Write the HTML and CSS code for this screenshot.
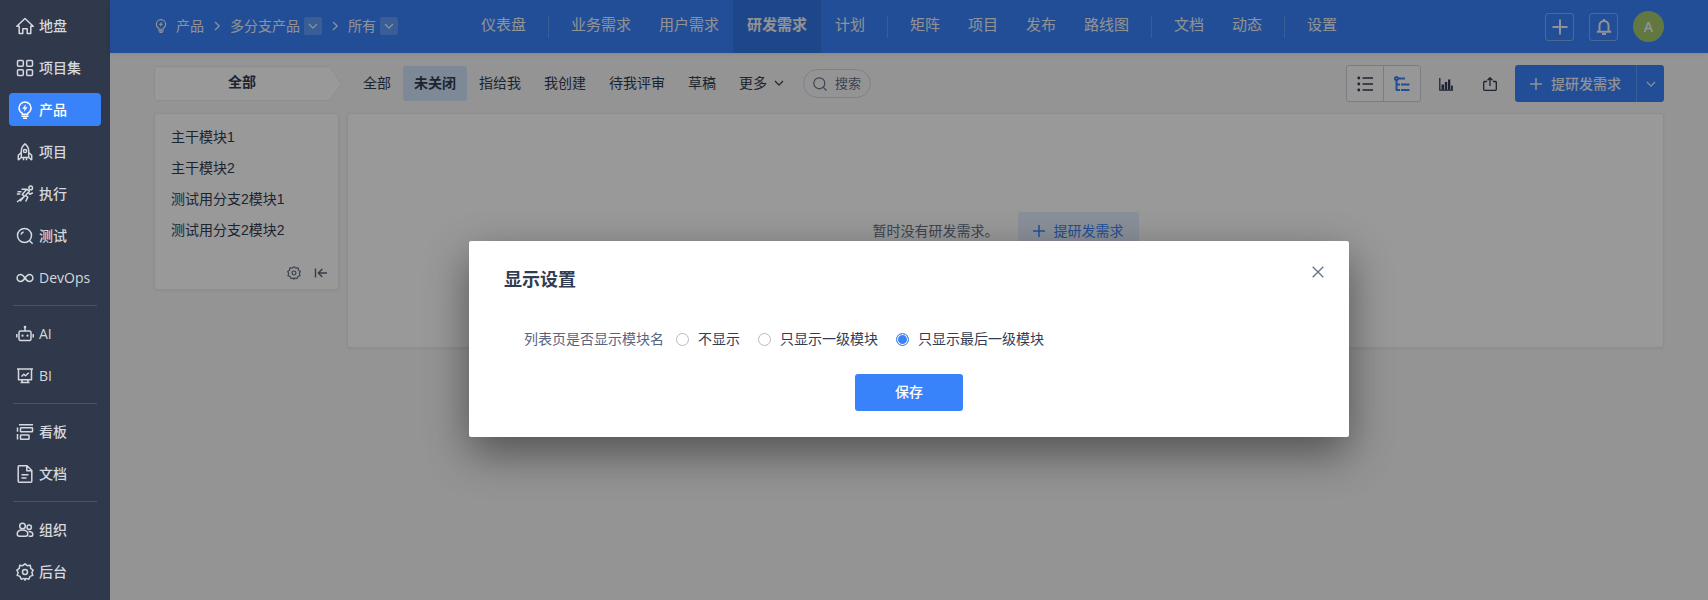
FILE: index.html
```html
<!DOCTYPE html>
<html lang="zh-CN">
<head>
    <meta charset="UTF-8">
    <meta name="viewport" content="width=device-width, initial-scale=1.0">
    <title>研发需求 - 显示设置</title>
    <link rel="stylesheet" href="styles.css">
</head>
<body>
    <!-- 公用图标 -->
    <svg class="icon-defs" aria-hidden="true">
        <symbol id="icon-bulb" viewBox="0 0 18 18">
            <path d="M6.2 13.2v-1.1C4.300 11 3 9.200 3 6.900a6 6 0 0 1 12 0c0 2.300-1.300 4.100-3.200 5.200v1.100zM5.500 15.200h7M7 17.200h4"/>
            <path class="fill" d="M9.800 3.300L6.300 7.700h2.200l-.6 3 3.700-4.500H9.300z"/>
        </symbol>
        <symbol id="icon-gear" viewBox="0 0 18 18">
            <path d="M9 .8l2.300 1.900 3-.4.4 3 2.400 1.800L15.900 9.500l.9 2.900-2.800 1-1.200 2.800-2.900-.8L9 17.200l-1-1.800-2.800.8L4 13.400l-2.800-1 .9-2.900L.9 7.100l2.400-1.800.4-3 3 .4z"/>
            <circle cx="9" cy="9" r="2.500"/>
        </symbol>
        <symbol id="icon-down" viewBox="0 0 10 10"><path d="M1 3l4 4.200L9 3"/></symbol>
        <symbol id="icon-right" viewBox="0 0 10 10"><path d="M3 1l4.200 4L3 9"/></symbol>
        <symbol id="icon-plus" viewBox="0 0 12 12"><path d="M6 0v12M0 6h12"/></symbol>
    </svg>

    <!-- 左侧主菜单 -->
    <nav class="sidebar">
        <a href="#" class="menu-item">
            <svg class="icon" viewBox="0 0 18 18"><path d="M.8 9.200L9 1.500l8.200 7.700h-2.400v7.300h-3.600v-4.800H6.800v4.800H3.200V9.200z"/></svg>地盘
        </a>
        <a href="#" class="menu-item">
            <svg class="icon" viewBox="0 0 18 18"><rect x="1.500" y="1.500" width="5.800" height="5.800" rx="1"/><rect x="10.700" y="1.500" width="5.800" height="5.800" rx="1"/><rect x="1.500" y="10.700" width="5.800" height="5.800" rx="1"/><rect x="10.700" y="10.700" width="5.800" height="5.800" rx="1"/></svg>项目集
        </a>
        <a href="#" class="menu-item active">
            <svg class="icon"><use href="#icon-bulb"/></svg>产品
        </a>
        <a href="#" class="menu-item">
            <svg class="icon" viewBox="0 0 18 18"><path d="M9 .8C6.500 2.800 5.300 5.400 5.300 8.200v6.300h7.400V8.200C12.700 5.400 11.500 2.800 9 .8zM5.300 9.500L2.300 12.300v4.500l3-2.300M12.700 9.500l3 2.800v4.500l-3-2.300M7.500 14.500v2.700M10.500 14.500v2.700"/><circle cx="9" cy="8" r="1.600"/></svg>项目
        </a>
        <a href="#" class="menu-item">
            <svg class="icon" viewBox="0 0 18 18"><circle cx="14.700" cy="2.900" r="1.800"/><path d="M5.500 4.200h5l2.800 2-3.800 4.300 2.300 1.700-2.100 4.300M10.300 4.800L6.200 9.400l2.300 2L1 17M8.500 11.200L4 16.300M12.300 7.500l1.600 1.700 2.900-1.400M1.500 6.700h4M.8 9h3.500"/></svg>执行
        </a>
        <a href="#" class="menu-item">
            <svg class="icon" viewBox="0 0 18 18"><circle cx="8.500" cy="8.500" r="7"/><path d="M13.600 13.700l3 3M5 7.500C5.400 6.200 6.300 5.300 7.600 5"/></svg>测试
        </a>
        <a href="#" class="menu-item">
            <svg class="icon" viewBox="0 0 18 18"><path d="M9 9C7.400 6.600 6.200 5.500 4.600 5.500a3.500 3.500 0 0 0 0 7C6.200 12.500 7.400 11.400 9 9s2.800-3.500 4.400-3.500a3.500 3.500 0 0 1 0 7C11.800 12.500 10.600 11.400 9 9z"/></svg>DevOps
        </a>
        <hr class="menu-divider">
        <a href="#" class="menu-item">
            <svg class="icon" viewBox="0 0 18 18"><rect x="3" y="6" width="12" height="9.500" rx="1.500"/><path d="M9 6V2.500M.8 9v3.500M17.200 9v3.500"/><circle class="fill" cx="9" cy="2" r="1.300"/><circle class="fill" cx="6.500" cy="10.700" r="1.100"/><circle class="fill" cx="11.500" cy="10.700" r="1.100"/></svg>AI
        </a>
        <a href="#" class="menu-item">
            <svg class="icon" viewBox="0 0 18 18"><path d="M1 2h16M2.500 2v10.700h13V2M5.500 9.500l2.300-2.300 1.700 1.500 3.300-3M6.500 13l-1 3M11.500 13l1 3M4.500 15.500h9"/></svg>BI
        </a>
        <hr class="menu-divider">
        <a href="#" class="menu-item">
            <svg class="icon" viewBox="0 0 18 18"><path d="M3 1.800h14M1.500 4.500v4.200M1.500 11v5.500"/><rect x="4.500" y="4.800" width="12" height="4" rx=".5"/><rect x="4.500" y="12" width="8.500" height="4.300" rx=".5"/></svg>看板
        </a>
        <a href="#" class="menu-item">
            <svg class="icon" viewBox="0 0 18 18"><path d="M11 .8H3.200a1 1 0 0 0-1 1v14.400a1 1 0 0 0 1 1h11.600a1 1 0 0 0 1-1V5.500zM10.800 1v4.700h4.800M5.500 9.700h7M5.500 13h5"/></svg>文档
        </a>
        <hr class="menu-divider">
        <a href="#" class="menu-item">
            <svg class="icon" viewBox="0 0 18 18"><circle cx="6.500" cy="5" r="2.800"/><circle cx="13.200" cy="6.200" r="2.200"/><path d="M1.200 13c0-2.400 2-4 5.300-4s5.300 1.600 5.300 4c0 1.500-1 2.200-2.300 2.200h-6c-1.300 0-2.300-.7-2.300-2.200zM12.500 10.500c2.700 0 4.300 1.200 4.300 2.900 0 1.200-.8 1.800-1.800 1.800h-2.300"/></svg>组织
        </a>
        <a href="#" class="menu-item">
            <svg class="icon"><use href="#icon-gear"/></svg>后台
        </a>
    </nav>

    <div class="app">
        <!-- 顶部导航 -->
        <header class="header">
            <div class="breadcrumb">
                <svg class="icon icon-md"><use href="#icon-bulb"/></svg>
                <a href="#">产品</a>
                <svg class="icon icon-sm"><use href="#icon-right"/></svg>
                <a href="#">多分支产品</a>
                <button class="drop-btn" aria-label="切换产品"><svg class="icon icon-sm"><use href="#icon-down"/></svg></button>
                <svg class="icon icon-sm"><use href="#icon-right"/></svg>
                <a href="#">所有</a>
                <button class="drop-btn" aria-label="切换分支"><svg class="icon icon-sm"><use href="#icon-down"/></svg></button>
            </div>
            <nav class="navbar">
                <a href="#">仪表盘</a>
                <span class="nav-divider"></span>
                <a href="#">业务需求</a>
                <a href="#">用户需求</a>
                <a href="#" class="active">研发需求</a>
                <a href="#">计划</a>
                <span class="nav-divider"></span>
                <a href="#">矩阵</a>
                <a href="#">项目</a>
                <a href="#">发布</a>
                <a href="#">路线图</a>
                <span class="nav-divider"></span>
                <a href="#">文档</a>
                <a href="#">动态</a>
                <span class="nav-divider"></span>
                <a href="#">设置</a>
            </nav>
            <div class="header-tools">
                <button class="tool-btn" aria-label="新建">
                    <svg class="icon icon-lg" viewBox="0 0 16 16"><path d="M8 .5v15M.5 8h15"/></svg>
                </button>
                <button class="tool-btn" aria-label="通知">
                    <svg class="icon icon-lg" viewBox="0 0 16 16"><path d="M3.500 12.500V6.500a4.500 4.500 0 0 1 9 0v6M.8 12.700h14.400M8 0v2M6 15h4"/></svg>
                </button>
                <button class="avatar">A</button>
            </div>
        </header>

        <main class="main">
            <!-- 工具栏 -->
            <div class="toolbar">
                <div class="module-title">
                    <svg class="module-shape" viewBox="0 0 188 35" preserveAspectRatio="none" aria-hidden="true"><path d="M2.500.5h173l12 17-12 17h-173a2 2 0 0 1-2-2v-30a2 2 0 0 1 2-2z"/></svg>
                    <span>全部</span>
                </div>
                <div class="filters">
                    <a href="#">全部</a>
                    <a href="#" class="active">未关闭</a>
                    <a href="#">指给我</a>
                    <a href="#">我创建</a>
                    <a href="#">待我评审</a>
                    <a href="#">草稿</a>
                    <a href="#">更多<svg class="icon icon-sm"><use href="#icon-down"/></svg></a>
                </div>
                <button class="search-btn">
                    <svg class="icon icon-md" viewBox="0 0 14 14"><circle cx="6.300" cy="6.300" r="5.500"/><path d="M10.300 10.300l3.200 3.200"/></svg>搜索
                </button>
                <div class="actions">
                    <div class="view-switch">
                        <button aria-label="列表">
                            <svg class="icon icon-lg" viewBox="0 0 16 16"><path d="M5.500 2H16M5.500 8H16M5.500 14H16"/><circle class="fill" cx="1.800" cy="2" r="1.400"/><circle class="fill" cx="1.800" cy="8" r="1.400"/><circle class="fill" cx="1.800" cy="14" r="1.400"/></svg>
                        </button>
                        <button class="on" aria-label="树形">
                            <svg class="icon icon-lg" viewBox="0 0 16 16"><path d="M4 2.500h7M2.500 4v10H6M2.500 8.500H6M7 8.500h8.500M7 14h8.500"/><circle cx="2.500" cy="2.500" r="1.500"/></svg>
                        </button>
                    </div>
                    <button class="icon-btn" aria-label="报表">
                        <svg class="icon icon-md" viewBox="0 0 14 14"><path d="M.8 1v12.200H14"/><path class="fill" d="M2.500 7.500h2.500v5.200H2.500zM5.800 5h2.400v7.700H5.800zM9 2.500h2.300v10.200H9zM12 8.500h1.800v4.200H12z"/></svg>
                    </button>
                    <button class="icon-btn" aria-label="导出">
                        <svg class="icon icon-md" viewBox="0 0 14 14"><path d="M4 4.500H1.500a.8.8 0 0 0-.8.800v7.200c0 .4.400.8.800.8h11c.4 0 .8-.4.800-.8V5.300a.8.8 0 0 0-.8-.8H10M7 9V1M4.500 3.200L7 .8l2.500 2.400"/></svg>
                    </button>
                    <div class="create-group">
                        <button class="create-btn"><svg class="icon icon-plus"><use href="#icon-plus"/></svg>提研发需求</button>
                        <button class="create-more" aria-label="更多操作"><svg class="icon icon-sm"><use href="#icon-down"/></svg></button>
                    </div>
                </div>
            </div>

            <div class="content">
                <!-- 模块树 -->
                <aside class="module-tree">
                    <ul>
                        <li><a href="#">主干模块1</a></li>
                        <li><a href="#">主干模块2</a></li>
                        <li><a href="#">测试用分支2模块1</a></li>
                        <li><a href="#">测试用分支2模块2</a></li>
                    </ul>
                    <div class="tree-footer">
                        <button aria-label="设置"><svg class="icon icon-md"><use href="#icon-gear"/></svg></button>
                        <button aria-label="收起"><svg class="icon icon-md" viewBox="0 0 14 14"><path d="M1.500 2.500v9M13 7H4.500M8.300 3L4.300 7l4 4"/></svg></button>
                    </div>
                </aside>
                <section class="list-panel">
                    <span>暂时没有研发需求。</span>
                    <button class="empty-btn"><svg class="icon icon-plus"><use href="#icon-plus"/></svg>提研发需求</button>
                </section>
            </div>
        </main>

        <!-- 显示设置弹窗 -->
        <div class="overlay">
            <form class="modal" role="dialog" aria-labelledby="modalTitle">
                <div class="modal-header">
                    <h1 id="modalTitle">显示设置</h1>
                    <button type="button" class="close-btn" aria-label="关闭">
                        <svg class="icon icon-plus" viewBox="0 0 12 12"><path d="M.7.7l10.600 10.600M11.300.7L.7 11.300"/></svg>
                    </button>
                </div>
                <div class="form-row" role="radiogroup" aria-labelledby="showLabel">
                    <span id="showLabel" class="form-label">列表页是否显示模块名</span>
                    <label><input type="radio" name="showModule" value="0">不显示</label>
                    <label><input type="radio" name="showModule" value="base">只显示一级模块</label>
                    <label><input type="radio" name="showModule" value="end" checked>只显示最后一级模块</label>
                </div>
                <button type="button" class="save-btn">保存</button>
            </form>
        </div>
    </div>
</body>
</html>
```
FILE: styles.css
```css
* {
    box-sizing: border-box;
}

body {
    margin: 0;
    display: flex;
    min-height: 100vh;
    background-color: #f7f7f8;
    color: #313c52;
    font-family: "Liberation Sans", "Noto Sans CJK SC", sans-serif;
    font-size: 14px;
    line-height: 20px;
}

a {
    color: inherit;
    text-decoration: none;
}

button {
    display: flex;
    align-items: center;
    justify-content: center;
    padding: 0;
    border: none;
    background: none;
    color: inherit;
    font: inherit;
    cursor: pointer;
}

/* 图标 */
.icon-defs {
    position: absolute;
    width: 0;
    height: 0;
}

.icon {
    flex: none;
    width: 18px;
    height: 18px;
    fill: none;
    stroke: currentColor;
    stroke-width: 1.5;
    stroke-linejoin: round;
}

.fill {
    fill: currentColor;
    stroke: none;
}

.icon-lg {
    width: 16px;
    height: 16px;
}

.icon-md {
    width: 14px;
    height: 14px;
}

.icon-plus {
    width: 12px;
    height: 12px;
}

.icon-sm {
    width: 10px;
    height: 10px;
    stroke-width: 1.2;
}

/* 左侧主菜单 */
.sidebar {
    flex: none;
    width: 110px;
    padding: 9px;
    display: flex;
    flex-direction: column;
    gap: 9px;
    background-color: #2f394b;
    color: #d5d8de;
    font-family: "Open Sans", "Noto Sans CJK SC", sans-serif;
}

.menu-item {
    display: flex;
    align-items: center;
    gap: 5px;
    height: 33px;
    padding-left: 7px;
    border-radius: 4px;
    font-weight: 500;
}

.menu-item.active {
    background-color: #3883fa;
    color: #fff;
}

.menu-divider {
    width: 84px;
    height: 1px;
    margin: 2px 4px;
    border: none;
    background-color: #4b5465;
}

/* 顶部导航 */
.app {
    position: relative;
    flex: 1;
    min-width: 0;
}

.header {
    display: grid;
    grid-template-columns: 1fr auto 1fr;
    align-items: center;
    height: 53px;
    padding: 0 44px;
    background-color: #3883fa;
    color: #f0f4fb;
    box-shadow: 0 1px 4px rgba(0, 0, 0, 0.1);
}

.breadcrumb {
    display: flex;
    align-items: center;
    gap: 8px;
    padding-bottom: 2px;
    white-space: nowrap;
}

.drop-btn {
    width: 18px;
    height: 18px;
    margin-left: -4px;
    border-radius: 2px;
    background-color: rgba(255, 255, 255, 0.2);
}

.navbar {
    display: flex;
    align-items: center;
    height: 53px;
    font-size: 15px;
    white-space: nowrap;
}

.navbar a {
    padding: 0 14px;
    line-height: 49px;
    height: 53px;
}

.navbar .active {
    background-color: #3277e6;
    font-weight: bold;
}

.nav-divider {
    width: 1px;
    height: 22px;
    margin: 0 8px;
    background-color: rgba(255, 255, 255, 0.2);
}

.header-tools {
    display: flex;
    align-items: center;
    justify-content: flex-end;
    gap: 15px;
}

.tool-btn {
    width: 29px;
    height: 28px;
    border: 1px solid rgba(255, 255, 255, 0.35);
    border-radius: 3px;
}

.tool-btn .icon {
    stroke-width: 2;
}

.avatar {
    width: 31px;
    height: 31px;
    border-radius: 50%;
    background-color: #a5c66c;
    font-family: "Open Sans", sans-serif;
    font-weight: 600;
}

/* 工具栏 */
.main {
    padding: 12px 44px;
}

.toolbar {
    display: flex;
    align-items: center;
    height: 37px;
    white-space: nowrap;
}

.module-title {
    position: relative;
    width: 188px;
    height: 35px;
    padding-right: 12px;
    line-height: 33px;
    text-align: center;
    font-weight: bold;
}

.module-title span {
    position: relative;
}

.module-shape {
    position: absolute;
    top: 0;
    left: 0;
    width: 100%;
    height: 100%;
    fill: #fff;
    stroke: #ececee;
}

.filters {
    display: flex;
    gap: 1px;
    margin-left: 10px;
}

.filters a {
    display: flex;
    align-items: center;
    gap: 7px;
    height: 35px;
    padding: 0 11px 2px;
    border-radius: 3px;
}

.filters .active {
    background-color: #d2e4fc;
    font-weight: bold;
}

.search-btn {
    gap: 8px;
    height: 29px;
    margin-left: 8px;
    padding: 0 9px;
    border: 1px solid #d4d6e0;
    border-radius: 15px;
    color: #64708a;
    font-size: 13px;
}

.search-btn .icon {
    stroke-width: 1.2;
}

.actions {
    display: flex;
    align-items: center;
    margin-left: auto;
}

.view-switch {
    display: flex;
    margin-right: 6px;
    border: 1px solid #cdd0da;
    border-radius: 3px;
    background-color: #fcfcfd;
}

.view-switch button {
    width: 36px;
    height: 35px;
}

.view-switch .on {
    width: 37px;
    border-left: 1px solid #cdd0da;
    color: #3883fa;
}

.view-switch .on .icon {
    stroke-width: 2;
}

.icon-btn {
    width: 38px;
    height: 37px;
    margin-right: 6px;
}

.icon-btn .icon {
    stroke-width: 1.3;
}

.create-group {
    display: flex;
    height: 37px;
    border-radius: 3px;
    background-color: #3883fa;
    color: #eef3fb;
}

.create-btn {
    gap: 9px;
    padding: 0 15px;
    font-weight: 500;
}

.create-more {
    width: 28px;
    border-left: 1px solid #5f9bfa;
}

/* 内容区 */
.content {
    display: flex;
    align-items: flex-start;
    gap: 8px;
    margin-top: 11px;
}

.module-tree,
.list-panel {
    border: 1px solid #ececee;
    border-radius: 3px;
    background-color: #fff;
    box-shadow: 0 1px 3px rgba(0, 0, 0, 0.06);
}

.module-tree {
    flex: none;
    width: 185px;
    padding: 8px 10px 0 16px;
}

.module-tree ul {
    margin: 0;
    padding: 0;
    list-style: none;
    line-height: 31px;
}

.tree-footer {
    display: flex;
    justify-content: flex-end;
    gap: 13px;
    padding: 20px 0 9px;
    color: #5b6579;
}

.tree-footer .icon {
    stroke-width: 1.4;
}

.list-panel {
    flex: 1;
    display: flex;
    align-items: center;
    justify-content: center;
    gap: 19px;
    min-height: 235px;
    color: #64708a;
}

.empty-btn {
    gap: 9px;
    height: 37px;
    padding: 0 15px;
    border-radius: 3px;
    background-color: #e6f0ff;
    color: #3883fa;
}

/* 弹窗 */
.overlay {
    position: absolute;
    top: 0;
    right: 0;
    bottom: 0;
    left: 0;
    display: flex;
    align-items: flex-start;
    justify-content: center;
    padding-top: calc(40vh + 1px);
    background-color: rgba(0, 0, 0, 0.4);
}

.modal {
    width: 880px;
    max-width: 96%;
    padding: 26px 35px;
    border-radius: 2px;
    background-color: #fff;
    box-shadow: 0 16px 44px rgba(0, 0, 0, 0.45);
}

.modal-header {
    display: flex;
    align-items: flex-start;
    justify-content: space-between;
    margin-right: -10px;
}

.modal-header h1 {
    margin: 0;
    font-size: 18px;
    line-height: 26px;
}

.close-btn {
    width: 12px;
    height: 10px;
    color: #64708a;
}

.close-btn .icon {
    stroke-width: 1.3;
}

.form-row {
    display: flex;
    align-items: center;
    gap: 18px;
    margin-top: 36px;
    padding-left: 20px;
}

.form-label {
    margin-right: -6px;
    color: #5a6480;
}

.form-row label {
    display: flex;
    align-items: center;
    gap: 9px;
}

.form-row input {
    appearance: none;
    width: 13px;
    height: 13px;
    margin: 0;
    border: 1px solid #b4bac8;
    border-radius: 50%;
}

.form-row input:checked {
    border-color: #3883fa;
    background-color: #3883fa;
    box-shadow: inset 0 0 0 1px #fff;
}

.save-btn {
    width: 108px;
    height: 37px;
    margin: 25px auto 0;
    padding-bottom: 2px;
    border-radius: 3px;
    background-color: #3883fa;
    color: #fff;
    font-weight: 500;
}
```
